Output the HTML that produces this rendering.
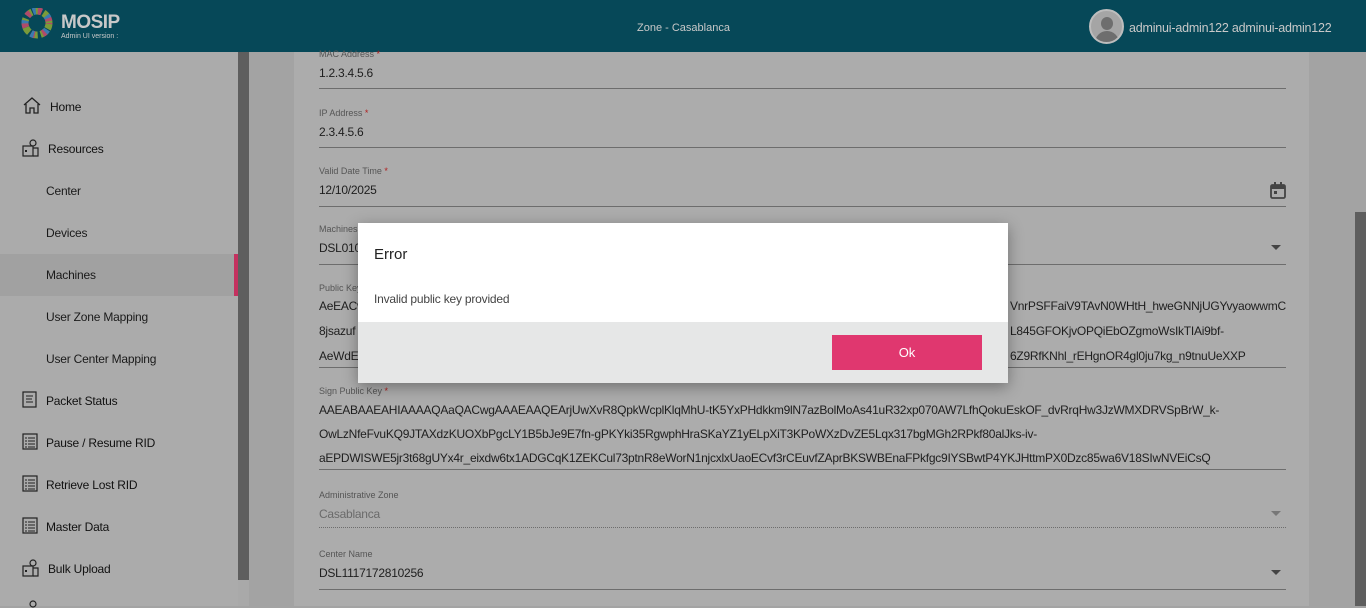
<!DOCTYPE html>
<html><head><meta charset="utf-8"><style>
*{margin:0;padding:0;box-sizing:border-box}
body{width:1366px;height:606px;overflow:hidden;font-family:"Liberation Sans",sans-serif;background:#a3a3a3;position:relative;color:#222}
.hdr{position:absolute;left:0;top:0;width:1366px;height:52px;background:#064858}
.side{position:absolute;left:0;top:52px;width:238px;height:554px;background:#ababab}
.sb{position:absolute;left:238px;top:52px;width:11px;height:528px;background:#5e5e5e}
.sbt{position:absolute;left:238px;top:580px;width:11px;height:26px;background:#a9a9a9}
.card{position:absolute;left:294px;top:52px;width:1015px;height:554px;background:#acacac}
.rs{position:absolute;left:1355px;top:212px;width:11px;height:394px;background:#5e5e5e}
.nav{position:absolute;left:0;width:238px;font-size:12px;color:#111;letter-spacing:-0.2px}
.nav.sub{left:46px;color:#1a1a1a}
.sel{position:absolute;left:0;top:254px;width:238px;height:42px;background:#a1a1a1}
.selb{position:absolute;left:234px;top:254px;width:4px;height:42px;background:#c4315f}
.ic{position:absolute;left:22px}
.lbl{position:absolute;left:319px;font-size:9px;color:#555}
.lbl b{color:#b02020;font-weight:normal}
.val{position:absolute;left:319px;font-size:12px;color:#1e1e1e;white-space:nowrap;letter-spacing:-0.25px}
.ln{position:absolute;left:319px;width:967px;height:1px;background:#6d6d6d}
.dlg{position:absolute;left:358px;top:223px;width:650px;height:160px;background:#fff;box-shadow:0 4px 14px rgba(0,0,0,.35)}
.ft{position:absolute;left:0;top:99px;width:650px;height:61px;background:#e6e7e7}
.ok{position:absolute;left:474px;top:13px;width:150px;height:35px;background:#e0376f;color:#fff;font-size:13px;text-align:center;line-height:35px}
.arr{position:absolute;left:1271px;width:0;height:0;border-left:5px solid transparent;border-right:5px solid transparent;border-top:5px solid #444}
</style></head><body>
<div class="hdr">
 <svg style="position:absolute;left:21px;top:8px" width="32" height="32" viewBox="0 0 32 32"><circle cx="16" cy="15" r="12" fill="none" stroke="#7a9a3a" stroke-width="7" stroke-dasharray="6 3"/><circle cx="16" cy="15" r="12" fill="none" stroke="#b04a6a" stroke-width="7" stroke-dasharray="4 8" stroke-dashoffset="3"/><circle cx="16" cy="15" r="12" fill="none" stroke="#3a7ab0" stroke-width="7" stroke-dasharray="3 12" stroke-dashoffset="8"/></svg>
 <div style="position:absolute;left:61px;top:12px;font-size:19px;font-weight:bold;color:#c8c8c8;letter-spacing:-0.5px">MOSIP</div>
 <div style="position:absolute;left:61px;top:33px;font-size:7px;color:#c8c8c8">Admin UI version :</div>
 <div style="position:absolute;left:637px;top:22px;font-size:11px;color:#c8c8c8">Zone - Casablanca</div>
 <div style="position:absolute;left:1089px;top:9px;width:35px;height:35px;border-radius:50%;background:#a5a5a5;border:2px solid #bdbdbd;overflow:hidden"><div style="position:absolute;left:10px;top:6px;width:12px;height:13px;border-radius:50%;background:#6e6e6e"></div><div style="position:absolute;left:4px;top:20px;width:24px;height:16px;border-radius:12px 12px 0 0;background:#6e6e6e"></div></div>
 <div style="position:absolute;left:1129px;top:21px;font-size:12.5px;color:#c8c8c8;letter-spacing:-0.2px">adminui-admin122 adminui-admin122</div>
</div>
<div class="side"></div>
<div class="sel"></div><div class="selb"></div>
<div class="sb"></div><div class="sbt"></div>
<div class="card"></div>
<div class="rs"></div>

<svg class="ic" style="top:97px" width="20" height="17" viewBox="0 0 20 17"><path d="M2 8L10 1l8 7M4 7v9h4v-5h4v5h4V7" fill="none" stroke="#222" stroke-width="1.3"/></svg>
<div class="nav" style="left:50px;top:100px">Home</div>
<svg class="ic" style="top:139px" width="18" height="18" viewBox="0 0 18 18"><circle cx="11" cy="4" r="3" fill="none" stroke="#222" stroke-width="1.2"/><rect x="1" y="7" width="10" height="10" fill="none" stroke="#222" stroke-width="1.2"/><path d="M11 9h5v8h-5" fill="none" stroke="#222" stroke-width="1.2"/><rect x="3" y="11" width="2" height="2" fill="#222"/></svg>
<div class="nav" style="left:48px;top:142px">Resources</div>
<div class="nav sub" style="top:184px">Center</div>
<div class="nav sub" style="top:226px">Devices</div>
<div class="nav sub" style="top:268px">Machines</div>
<div class="nav sub" style="top:310px">User Zone Mapping</div>
<div class="nav sub" style="top:352px">User Center Mapping</div>
<svg class="ic" style="top:391px" width="16" height="17" viewBox="0 0 16 17"><rect x="1" y="1" width="13" height="15" fill="none" stroke="#222" stroke-width="1.2"/><path d="M4 5h7M4 8h6M4 11h7" stroke="#222"/></svg>
<div class="nav" style="left:46px;top:394px">Packet Status</div>
<svg class="ic" style="top:433px" width="16" height="17" viewBox="0 0 16 17"><rect x="1" y="1" width="14" height="15" fill="none" stroke="#222" stroke-width="1.2"/><path d="M3 5h2M6 5h7M3 8h2M6 8h7M3 11h2M6 11h7M3 14h2M6 14h7" stroke="#222"/></svg>
<div class="nav" style="left:46px;top:436px">Pause / Resume RID</div>
<svg class="ic" style="top:475px" width="16" height="17" viewBox="0 0 16 17"><rect x="1" y="1" width="14" height="15" fill="none" stroke="#222" stroke-width="1.2"/><path d="M3 5h2M6 5h7M3 8h2M6 8h7M3 11h2M6 11h7M3 14h2M6 14h7" stroke="#222"/></svg>
<div class="nav" style="left:46px;top:478px">Retrieve Lost RID</div>
<svg class="ic" style="top:517px" width="16" height="17" viewBox="0 0 16 17"><rect x="1" y="1" width="14" height="15" fill="none" stroke="#222" stroke-width="1.2"/><path d="M3 5h2M6 5h7M3 8h2M6 8h7M3 11h2M6 11h7M3 14h2M6 14h7" stroke="#222"/></svg>
<div class="nav" style="left:46px;top:520px">Master Data</div>
<svg class="ic" style="top:559px" width="18" height="18" viewBox="0 0 18 18"><circle cx="11" cy="4" r="3" fill="none" stroke="#222" stroke-width="1.2"/><rect x="1" y="7" width="10" height="10" fill="none" stroke="#222" stroke-width="1.2"/><path d="M11 9h5v8h-5" fill="none" stroke="#222" stroke-width="1.2"/><rect x="3" y="11" width="2" height="2" fill="#222"/></svg>
<div class="nav" style="left:48px;top:562px">Bulk Upload</div>
<svg class="ic" style="top:600px" width="18" height="8" viewBox="0 0 18 8"><circle cx="11" cy="4" r="3" fill="none" stroke="#222" stroke-width="1.2"/></svg>

<div class="lbl" style="top:49px">MAC Address <b>*</b></div>
<div class="val" style="top:66px">1.2.3.4.5.6</div>
<div class="ln" style="top:88px"></div>
<div class="lbl" style="top:108px">IP Address <b>*</b></div>
<div class="val" style="top:125px">2.3.4.5.6</div>
<div class="ln" style="top:147px"></div>
<div class="lbl" style="top:166px">Valid Date Time <b>*</b></div>
<div class="val" style="top:183px">12/10/2025</div>
<svg style="position:absolute;left:1270px;top:182px" width="16" height="17" viewBox="0 0 16 17"><rect x="1" y="3" width="14" height="13" rx="1.5" fill="none" stroke="#444" stroke-width="1.8"/><rect x="1" y="3" width="14" height="4" fill="#444"/><rect x="4" y="0" width="2" height="4" fill="#444"/><rect x="10" y="0" width="2" height="4" fill="#444"/><rect x="4" y="9" width="3" height="3" fill="#444"/></svg>
<div class="ln" style="top:206px"></div>
<div class="lbl" style="top:224px">Machines</div>
<div class="val" style="top:241px">DSL010</div>
<div class="arr" style="top:245px"></div>
<div class="ln" style="top:264px"></div>
<div class="lbl" style="top:283px">Public Key</div>
<div class="val" style="top:299px">AeEACwwRXVnrPSFFaiV9TAvN0WHtH_hweGNNjUGYvyaowwmC</div>
<div class="val" style="top:324px">8jsazuf</div>
<div class="val" style="top:349px">AeWdE</div>
<div class="val" style="top:299px;left:1010px">VnrPSFFaiV9TAvN0WHtH_hweGNNjUGYvyaowwmC</div>
<div class="val" style="top:324px;left:1010px">L845GFOKjvOPQiEbOZgmoWsIkTIAi9bf-</div>
<div class="val" style="top:349px;left:1010px">6Z9RfKNhl_rEHgnOR4gl0ju7kg_n9tnuUeXXP</div>
<div class="ln" style="top:367px"></div>
<div class="lbl" style="top:386px">Sign Public Key <b>*</b></div>
<div class="val" style="top:403px">AAEABAAEAHIAAAAQAaQACwgAAAEAAQEArjUwXvR8QpkWcplKlqMhU-tK5YxPHdkkm9lN7azBolMoAs41uR32xp070AW7LfhQokuEskOF_dvRrqHw3JzWMXDRVSpBrW_k-</div>
<div class="val" style="top:427px">OwLzNfeFvuKQ9JTAXdzKUOXbPgcLY1B5bJe9E7fn-gPKYki35RgwphHraSKaYZ1yELpXiT3KPoWXzDvZE5Lqx317bgMGh2RPkf80alJks-iv-</div>
<div class="val" style="top:451px">aEPDWISWE5jr3t68gUYx4r_eixdw6tx1ADGCqK1ZEKCul73ptnR8eWorN1njcxlxUaoECvf3rCEuvfZAprBKSWBEnaFPkfgc9IYSBwtP4YKJHttmPX0Dzc85wa6V18SIwNVEiCsQ</div>
<div class="ln" style="top:469px"></div>
<div class="lbl" style="top:490px">Administrative Zone</div>
<div class="val" style="top:507px;color:#6a6a6a">Casablanca</div>
<div class="arr" style="top:511px;border-top-color:#777"></div>
<div class="ln" style="top:527px;height:0;background:none;border-top:1px dotted #6d6d6d"></div>
<div class="lbl" style="top:549px">Center Name</div>
<div class="val" style="top:566px">DSL1117172810256</div>
<div class="arr" style="top:570px"></div>
<div class="ln" style="top:589px"></div>

<div class="dlg">
 <div style="position:absolute;left:16px;top:23px;font-size:15px;color:#222">Error</div>
 <div style="position:absolute;left:16px;top:69px;font-size:12px;color:#444;letter-spacing:-0.2px">Invalid public key provided</div>
 <div class="ft"><div class="ok">Ok</div></div>
</div>
</body></html>
